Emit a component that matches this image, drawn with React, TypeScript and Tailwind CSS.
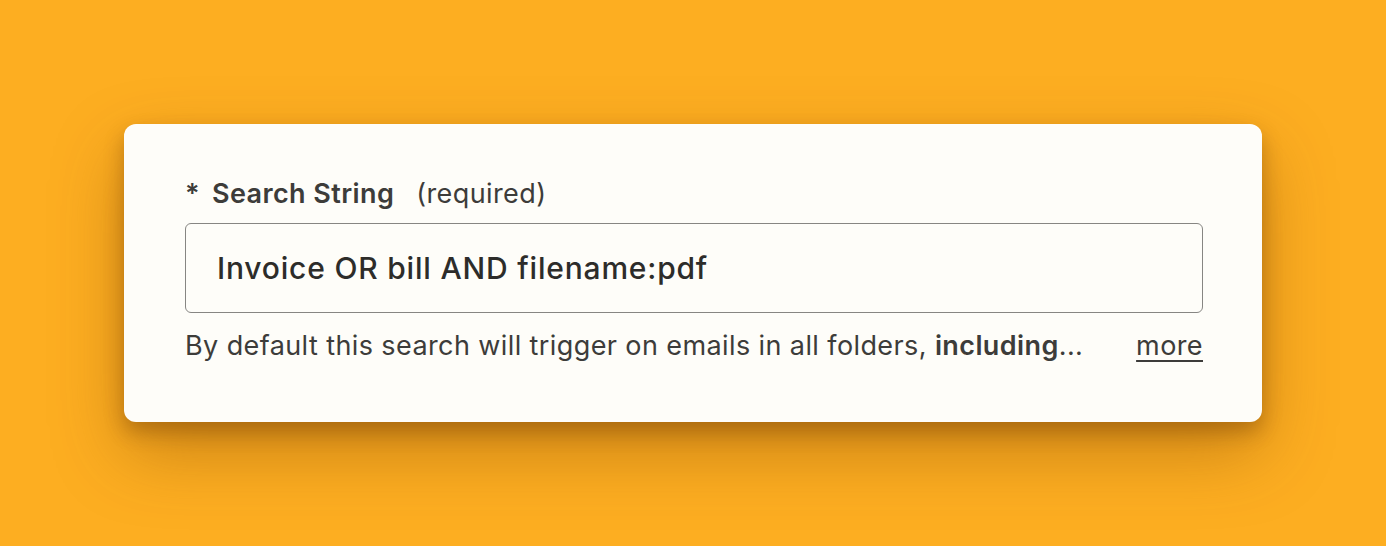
export default function App() {
  return (
    <div className="flex h-[546px] w-full items-start justify-center bg-[#fdae21] pt-[124px] font-['Inter',sans-serif]">
      <div className="w-[1138px] rounded-xl bg-[#fefdf9] pt-[54px] pr-[59px] pb-[60px] pl-[61px] shadow-[0_10px_20px_rgba(90,45,0,0.32),0_30px_70px_rgba(120,60,0,0.38)]">
        <label className="flex h-[32px] items-center text-[27px] tracking-[0.4px] text-[#3d3c3a]">
          <span className="mr-[12px] font-semibold">*</span>
          <span className="font-semibold">Search String</span>
          <span className="ml-[22px]">(required)</span>
        </label>
        <div className="mt-[13px] flex h-[90px] items-center rounded-md border-[1.5px] border-[#878683] px-[31px]">
          <span className="text-[30px] font-medium tracking-[0.8px] text-[#2d2c2a]">Invoice OR bill AND filename:pdf</span>
        </div>
        <div className="mt-[17px] flex h-[32px] items-center justify-between text-[27px] tracking-[0.4px] text-[#3d3c3a]">
          <p>
            By default this search will trigger on emails in all folders, <strong className="font-semibold">including</strong>...
          </p>
          <a href="#" className="underline underline-offset-[5px]">more</a>
        </div>
      </div>
    </div>
  )
}
